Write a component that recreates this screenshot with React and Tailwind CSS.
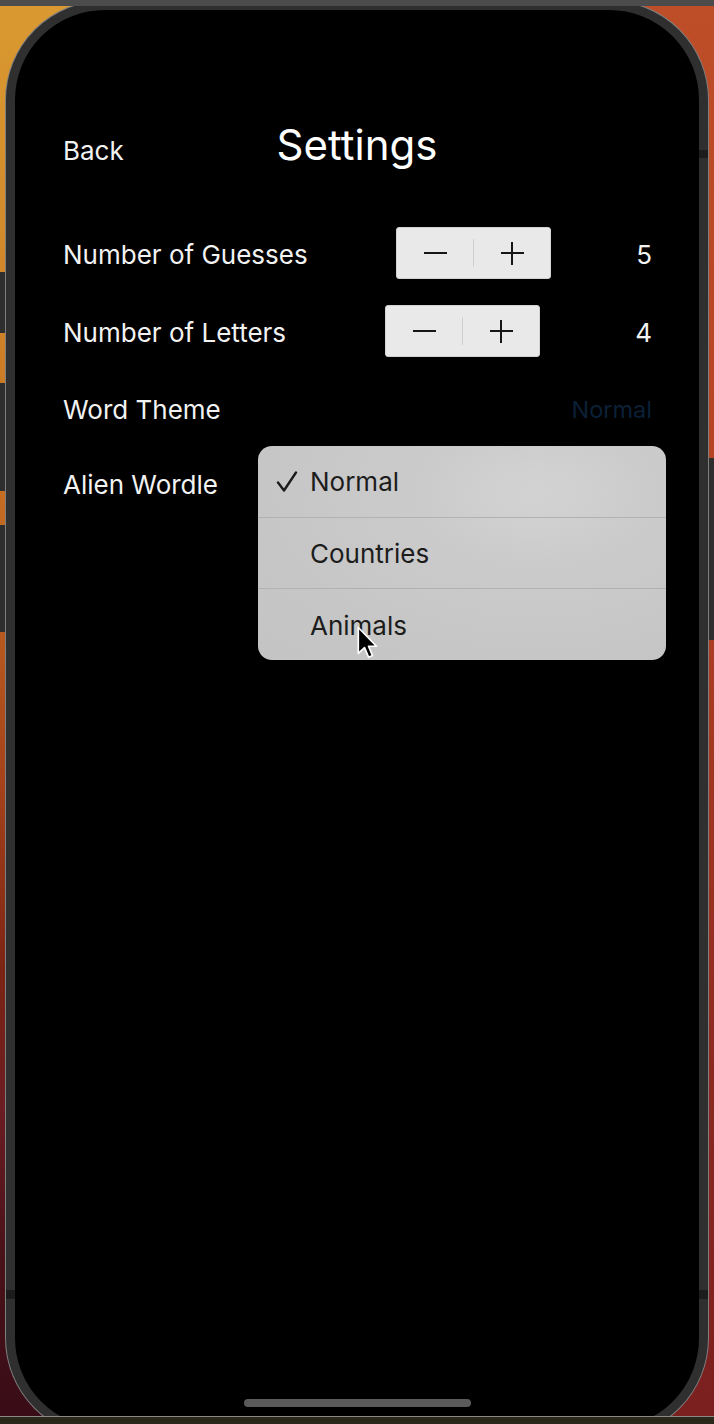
import React from 'react';

const FONT = "font-['Inter','Noto_Sans',sans-serif]";

function Stepper() {
  return (
    <div className="flex h-[52px] w-[155px] items-center rounded-[3px] border border-[#d3d3d3] bg-[#e9e9e9]">
      <div className="flex flex-1 items-center justify-center">
        <div className="h-[2px] w-[23px] bg-[#161616]" />
      </div>
      <div className="h-[28px] w-px bg-[#d0d0d0]" />
      <div className="flex flex-1 items-center justify-center">
        <div className="relative h-[23px] w-[23px]">
          <div className="absolute left-0 top-[10.5px] h-[2px] w-[23px] bg-[#161616]" />
          <div className="absolute left-[10.5px] top-0 h-[23px] w-[2px] bg-[#161616]" />
        </div>
      </div>
    </div>
  );
}

function Row({ label, className = '', children }) {
  return (
    <div className={`flex h-[52px] items-center pl-[48px] pr-[47px] ${className}`}>
      <span className="mt-[3px] text-[26px] leading-none text-[#f2f2f2]">{label}</span>
      {children}
    </div>
  );
}

const themes = ['Normal', 'Countries', 'Animals'];

export default function App() {
  return (
    <div
      className={`relative h-[1424px] w-[714px] overflow-hidden ${FONT} [background:linear-gradient(180deg,#da9a31_0%,#d08428_22%,#bf6320_40%,#a5421a_55%,#7c2414_68%,#6a1c22_78%,#4a1219_88%,#380c17_100%)_left_top/50%_100%_no-repeat,linear-gradient(180deg,#bd4e28_0%,#b44424_35%,#9c3320_60%,#862722_80%,#7a1f1f_100%)_right_top/50%_100%_no-repeat]`}
    >
      {/* phone */}
      <div className="ml-[5px] h-[1438px] w-[704px] rounded-[100px] bg-[#7f7f7f] p-px">
        <div className="relative flex h-full flex-col rounded-[99px] border-[9px] border-[#2f2f2f] bg-black">
          <div className="mt-[114px] grid grid-cols-[1fr_auto_1fr] items-baseline px-[48px]">
            <span className="text-[26px] leading-none text-[#f2f2f2]">Back</span>
            <span className="text-[42px] leading-none text-white">Settings</span>
            <span />
          </div>

          <div className="mt-[61px] flex flex-col gap-[26px]">
            <Row label="Number of Guesses">
              <div className="ml-auto">
                <Stepper />
              </div>
              <span className="mt-[3px] w-[101px] text-right text-[26px] leading-none text-[#f2f2f2]">5</span>
            </Row>
            <Row label="Number of Letters">
              <div className="ml-auto">
                <Stepper />
              </div>
              <span className="mt-[3px] w-[112px] text-right text-[26px] leading-none text-[#f2f2f2]">4</span>
            </Row>
            <Row label="Word Theme" className="-mt-[1px]">
              <span className="ml-auto mt-[3px] text-[23.5px] leading-none text-[#0b2037]">Normal</span>
            </Row>
            <Row label="Alien Wordle" className="-mt-[3px]" />
          </div>

          {/* theme menu */}
          <div className="absolute left-[243px] top-[436px] flex h-[214px] w-[408px] flex-col overflow-hidden rounded-[14px] bg-[radial-gradient(ellipse_at_68%_22%,#d3d3d3_0%,#cbcbcb_30%,#c6c6c6_70%,#c4c4c4_100%)]">
            {themes.map((t, i) => (
              <React.Fragment key={t}>
                {i > 0 && <div className="h-px bg-[#b2b2b2]" />}
                <div className="relative flex flex-1 items-center pl-[52px] text-[26px] leading-none text-[#1c1c1c]">
                  {i === 0 && (
                    <svg className="absolute left-[18px] top-[25px]" width="22" height="22" viewBox="0 0 22 22" fill="none">
                      <path d="M2 11.5 L8 19.5 L20 1.5" stroke="#1c1c1c" strokeWidth="2.4" strokeLinecap="round" strokeLinejoin="round" />
                    </svg>
                  )}
                  <span className="mt-[2px]">{t}</span>
                </div>
              </React.Fragment>
            ))}
          </div>

          {/* mouse pointer */}
          <svg className="absolute left-[342px] top-[616px]" width="22" height="34" viewBox="0 0 17 26">
            <path d="M1 1 L1 21 L5.8 16.6 L9 24 L12 22.7 L8.9 15.5 L15 15.5 Z" fill="#000" stroke="#fff" strokeWidth="1.3" strokeLinejoin="round" />
          </svg>

          <div className="mb-[21px] mt-auto h-[8px] w-[227px] self-center rounded-full bg-[#5a5a5a]" />
        </div>
      </div>

      {/* side buttons and antenna lines */}
      <div className="absolute left-0 top-[272px] h-[61px] w-[5px] bg-[#2e2e2e]" />
      <div className="absolute left-0 top-[383px] h-[108px] w-[5px] bg-[#2e2e2e]" />
      <div className="absolute left-0 top-[525px] h-[107px] w-[5px] bg-[#2e2e2e]" />
      <div className="absolute right-0 top-[458px] h-[182px] w-[5px] bg-[#2e2e2e]" />
      <div className="absolute right-[6px] top-[150px] h-[8px] w-[9px] bg-[#1c1c1c]" />
      <div className="absolute left-[6px] top-[1290px] h-[9px] w-[9px] bg-[#1c1c1c]" />
      <div className="absolute right-[6px] top-[1290px] h-[9px] w-[9px] bg-[#1c1c1c]" />

      {/* window chrome */}
      <div className="absolute inset-x-0 top-0 h-[6px] bg-[#4c4c4c]" />
      <div className="absolute inset-x-0 bottom-0 h-[8px] border-t border-[#8a8a8a] bg-[#2a2818]" />
    </div>
  );
}
